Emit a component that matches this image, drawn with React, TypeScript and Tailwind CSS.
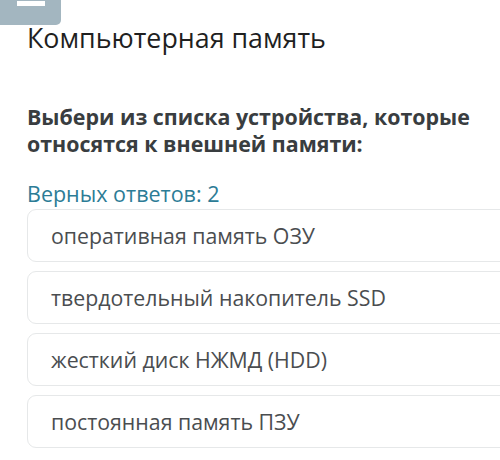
const options = [
  "оперативная память ОЗУ",
  "твердотельный накопитель SSD",
  "жесткий диск НЖМД (HDD)",
  "постоянная память ПЗУ",
]

const App = () => {
  return (
    <div className="w-[500px] h-[460px] overflow-hidden bg-white font-['Open_Sans',sans-serif]">
      {/* top tab */}
      <div className="w-[61px] h-[25px] bg-[#a3b6c0] rounded-br-[5px] pl-[17px] pt-[1px]">
        <div className="w-[28px] h-[5px] bg-white"></div>
      </div>

      <div className="pl-[27px]">
        <h1 className="text-[26.8px] leading-[26px] text-[#1f1f1f]">
          Компьютерная память
        </h1>

        <p className="mt-[52px] text-[21.4px] leading-[27px] font-bold text-[#393d40]">
          Выбери из списка устройства, которые
          <br />
          относятся к внешней памяти:
        </p>

        <p className="mt-[25px] text-[21.5px] leading-[24px] text-[#2c7c96]">
          Верных ответов: 2
        </p>

        <div className="mt-[3px] flex flex-col gap-[9px] w-[500px]">
          {options.map((o) => (
            <div
              key={o}
              className="h-[53px] flex items-center pl-[23px] border border-[#e6e8e9] rounded-[9px] text-[21.3px] text-[#4a4d50]"
            >
              {o}
            </div>
          ))}
        </div>
      </div>
    </div>
  )
}

export default App
